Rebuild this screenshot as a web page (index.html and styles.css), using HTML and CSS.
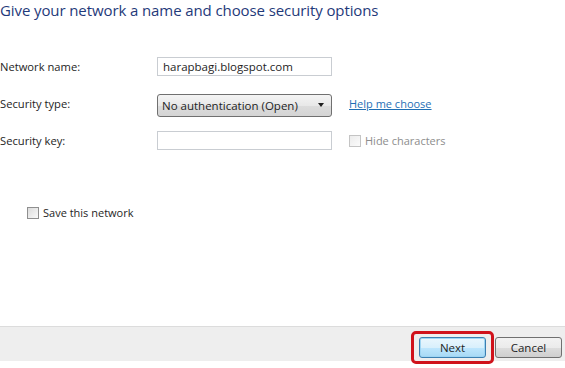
FILE: index.html
```html
<!DOCTYPE html>
<html lang="en">
<head>
    <meta charset="UTF-8">
    <title>Set up a wireless network</title>
    <link rel="stylesheet" href="styles.css">
</head>
<body>
    <div class="page">
        <h1 class="heading">Give your network a name and choose security options</h1>

        <div class="form">
            <div class="row">
                <label class="label">Network name:</label>
                <div class="field text-box">harapbagi.blogspot.com</div>
            </div>
            <div class="row">
                <label class="label">Security type:</label>
                <div class="field select-box">
                    <span>No authentication (Open)</span>
                    <span class="arrow"></span>
                </div>
                <a href="#" class="help">Help me choose</a>
            </div>
            <div class="row">
                <label class="label">Security key:</label>
                <div class="field text-box"></div>
                <div class="check disabled"><span class="box"></span>Hide characters</div>
            </div>
        </div>

        <div class="check save"><span class="box"></span>Save this network</div>
    </div>

    <div class="footer">
        <div class="highlight">
            <button class="btn primary">Next</button>
        </div>
        <button class="btn">Cancel</button>
    </div>
</body>
</html>
```

FILE: styles.css
```css
* {
    padding: 0;
    margin: 0;
    box-sizing: border-box;
    font-family: "Open Sans", "Noto Sans", sans-serif;
}

body {
    background-color: #fff;
    width: 565px;
    height: 368px;
    color: #1e1e1e;
}

.page {
    height: 326px;
}

.heading {
    font-size: 15px;
    font-weight: 400;
    color: #1f3a7a;
    line-height: 20px;
    letter-spacing: -0.1px;
}

.form {
    margin-top: 37px;
}

.row {
    display: flex;
    align-items: center;
    height: 19px;
    margin-bottom: 18px;
}

.label {
    width: 157px;
    font-size: 11.2px;
}

.field {
    width: 175px;
    height: 19px;
    border: 1px solid #c9cdd2;
    background-color: #fff;
    font-size: 11.5px;
    padding-left: 5px;
    display: flex;
    align-items: center;
}

.select-box {
    height: 23px;
    margin-top: 3px;
    border: 1px solid #707070;
    border-radius: 3px;
    background-image: linear-gradient(to bottom, #f4f4f4, #e8e8e8 50%, #dcdcdc 51%, #d4d4d4);
    justify-content: space-between;
    padding: 0 7px 0 4px;
}

.arrow {
    width: 0;
    height: 0;
    border-left: 3.5px solid transparent;
    border-right: 3.5px solid transparent;
    border-top: 4px solid #1e1e1e;
}

.help {
    margin-left: 17px;
    font-size: 11px;
    color: #1f6fb5;
}

.check {
    display: flex;
    align-items: center;
    font-size: 11px;
}

.box {
    width: 12px;
    height: 12px;
    border: 1px solid #8f8f8f;
    background-image: linear-gradient(135deg, #dcdcdc, #fafafa);
    margin-right: 4px;
}

.disabled {
    margin-left: 17px;
    color: #8d8d8d;
}

.disabled .box {
    border-color: #c4c4c4;
    background-image: linear-gradient(135deg, #ececec, #fbfbfb);
}

.save {
    margin-top: 55px;
    margin-left: 27px;
}

.footer {
    height: 35px;
    border-top: 1px solid #dcdcdc;
    background-color: #eeeeee;
    display: flex;
    justify-content: flex-end;
    align-items: flex-start;
    padding: 4px 3px 0 0;
}

.highlight {
    border: 3px solid #d0121b;
    border-radius: 5px;
    padding: 3px 5px;
    margin-right: 1px;
}

.btn {
    width: 67px;
    height: 21px;
    font-size: 11.5px;
    color: #1e1e1e;
    border: 1px solid #707070;
    border-radius: 3px;
    background-image: linear-gradient(to bottom, #f2f2f2, #ebebeb 50%, #dddddd 51%, #cfcfcf);
    margin-top: 6px;
}

.primary {
    border-color: #3c7fb1;
    background-image: linear-gradient(to bottom, #eaf6fd, #d9f0fc 50%, #bee6fd 51%, #a7d9f5);
    box-shadow: inset 0 0 0 1px #9fd5f3;
    margin-top: 0;
    display: block;
}
```
